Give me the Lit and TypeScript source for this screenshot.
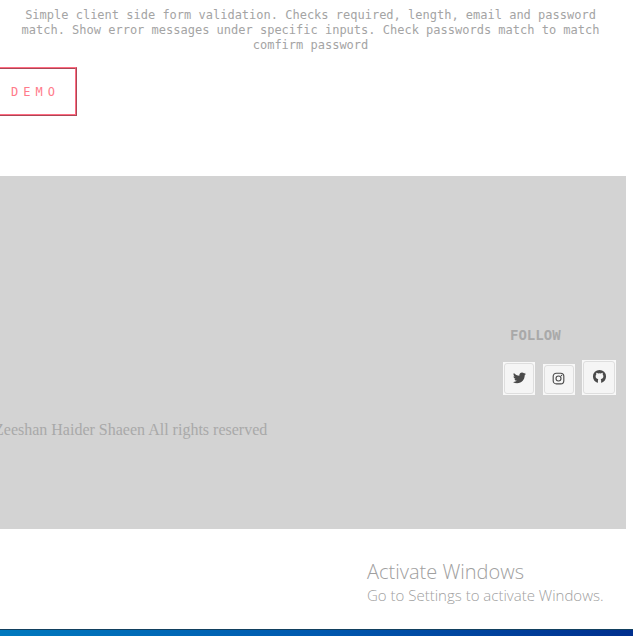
import { LitElement, html, css, svg } from "lit";
import { customElement } from "lit/decorators.js";

const twitter = svg`<path d="M22.46 6c-.77.35-1.6.58-2.46.69.88-.53 1.56-1.37 1.88-2.38-.83.5-1.75.85-2.72 1.05C18.37 4.5 17.26 4 16 4c-2.35 0-4.27 1.92-4.27 4.29 0 .34.04.67.11.98C8.28 9.09 5.11 7.38 3 4.79c-.37.63-.58 1.37-.58 2.15 0 1.49.75 2.81 1.91 3.56-.71 0-1.37-.2-1.95-.5v.03c0 2.08 1.48 3.82 3.44 4.21a4.22 4.22 0 0 1-1.93.07 4.28 4.28 0 0 0 4 2.98 8.521 8.521 0 0 1-5.33 1.84c-.34 0-.68-.02-1.02-.06C3.44 20.29 5.7 21 8.12 21 16 21 20.33 14.46 20.33 8.79c0-.19 0-.37-.01-.56.84-.6 1.56-1.36 2.14-2.23z"/>`;
const instagram = svg`<g fill="none" stroke="currentColor" stroke-width="1.8"><rect x="3.5" y="3.5" width="17" height="17" rx="5"/><circle cx="12" cy="12" r="4"/></g><circle cx="16.8" cy="7.2" r="1.2"/>`;
const github = svg`<path d="M12 1.500A10.500 10.500 0 0 0 1.500 12c0 4.600 3 8.600 7.100 10 .5.100.800-.2.800-.6v-3.400c0-.8.300-1.400.7-1.700-2.600-.3-4.300-1.600-4.300-4.600 0-1.300.4-2.200 1.100-3-.2-.6-.4-1.500.1-2.800 1 0 2 .6 2.800 1.100a9 9 0 0 1 4.400 0c.8-.5 1.800-1.100 2.800-1.100.5 1.300.3 2.200.1 2.800.7.8 1.100 1.700 1.100 3 0 3-1.700 4.300-4.300 4.600.4.300.7.900.7 1.700v3.400c0 .4.300.7.8.6 4.100-1.400 7.100-5.400 7.100-10A10.500 10.500 0 0 0 12 1.500z"/><path fill="none" stroke="currentColor" stroke-width="1.4" d="M9.600 19c-2.500.4-2.900-1.200-4-1.800"/>`;

@customElement("app-root")
export class AppRoot extends LitElement {
  static styles = css`
    :host {
      display: flex;
      flex-direction: column;
      min-height: 100vh;
      overflow: hidden;
      background: #fff;
      color: #a9a9a9;
    }
    * {
      box-sizing: border-box;
    }
    p,
    h2 {
      margin: 0;
    }
    .project {
      padding: 8px 20px 0 8px;
      margin-bottom: 60px;
      font: 12px/15px "DejaVu Sans Mono", monospace;
    }
    .summary {
      text-align: center;
      margin: 0 0 14px;
      color: #a4a4a4;
    }
    .demo {
      display: block;
      height: 49px;
      margin-left: -24px;
      padding: 2px 15px 0;
      width: 93px;
      text-align: right;
      border: 2px ridge #ff6b81;
      background: #fff;
      color: #ff7b8a;
      font: 12px/15px "DejaVu Sans Mono", monospace;
      letter-spacing: 5px;
    }
    footer {
      display: flex;
      flex-direction: column;
      height: 353px;
      margin-right: 7px;
      padding: 151px 10px 0 0;
      background: #d3d3d3;
    }
    .follow {
      align-self: flex-end;
      width: 113px;
    }
    h2 {
      padding-left: 7px;
      font: bold 14px/16px "DejaVu Sans Mono", monospace;
    }
    .links {
      display: flex;
      justify-content: space-between;
      align-items: flex-end;
      margin-top: 17px;
    }
    .link {
      display: flex;
      width: 32px;
      height: 33px;
      padding: 1px;
      background: #f8f8f8;
      color: #4a4a4a;
    }
    .link.small {
      height: 31px;
    }
    .link.large {
      width: 34px;
      height: 35px;
    }
    .tile {
      flex: 1;
      display: flex;
      align-items: center;
      justify-content: center;
      padding-bottom: 2px;
      border: 1px solid #dedede;
      border-radius: 3px;
      background: #f5f5f5;
    }
    svg {
      width: 15px;
      height: 15px;
      fill: currentColor;
    }
    .rights {
      margin: 26px 0 0 -6px;
      font: 16px/18px "Liberation Serif", serif;
    }
    .notice {
      align-self: flex-end;
      width: 266px;
      padding-top: 30px;
      color: #a0a0a0;
      font: 300 15px/20px "Open Sans", sans-serif;
      white-space: nowrap;
    }
    .notice .title {
      font-size: 20px;
      line-height: 26px;
    }
    .taskbar {
      height: 7px;
      margin-top: auto;
      border-top: 1px solid #12405f;
      background: linear-gradient(90deg, #0079be, #0059af 50%, #002f8e);
    }
  `;

  private link(name: string, size: string, icon: unknown) {
    return html`<a class="link ${size}" href="#" aria-label=${name}
      ><span class="tile"><svg viewBox="0 0 24 24" aria-hidden="true">${icon}</svg></span></a
    >`;
  }

  render() {
    return html`
      <section class="project">
        <p class="summary">
          Simple client side form validation. Checks required, length, email and password match.
          Show error messages under specific inputs. Check passwords match to match comfirm password
        </p>
        <button class="demo" type="button">DEMO</button>
      </section>
      <footer>
        <div class="follow">
          <h2>FOLLOW</h2>
          <nav class="links" aria-label="Follow">
            ${this.link("Twitter", "", twitter)} ${this.link("Instagram", "small", instagram)}
            ${this.link("GitHub", "large", github)}
          </nav>
        </div>
        <p class="rights">Zeeshan Haider Shaeen All rights reserved</p>
      </footer>
      <aside class="notice">
        <p class="title">Activate Windows</p>
        <p>Go to Settings to activate Windows.</p>
      </aside>
      <div class="taskbar"></div>
    `;
  }
}
